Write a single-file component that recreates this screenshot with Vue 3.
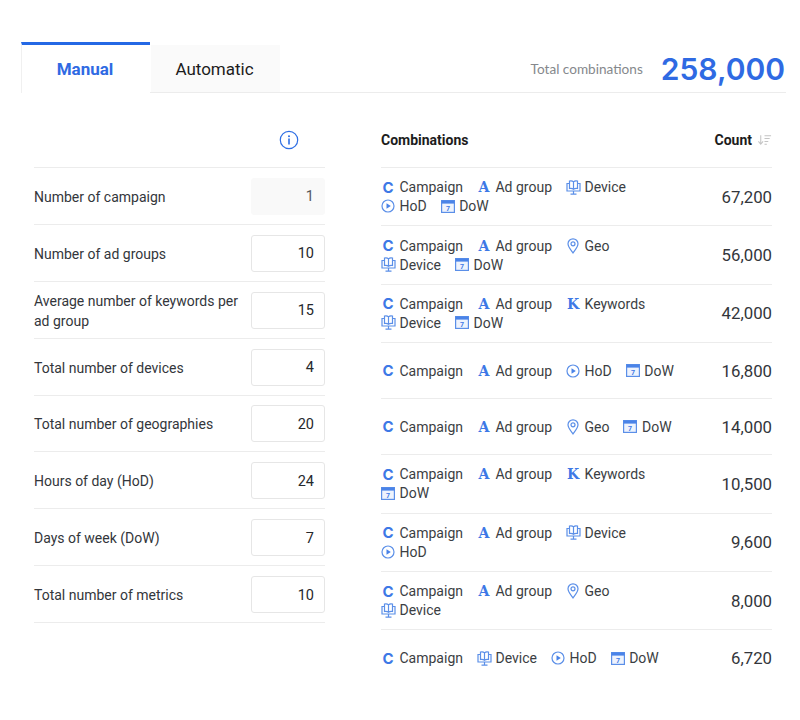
<template>
  <div class="page">
    <div class="tabs-bar">
      <div class="tab active">Manual</div>
      <div class="tab">Automatic</div>
      <div class="total">
        <span class="total-label">Total combinations</span>
        <span class="total-value">258,000</span>
      </div>
    </div>

    <div class="content">
      <div class="inputs">
        <div class="inputs-head">
          <svg class="info" width="20" height="20" viewBox="0 0 20 20">
            <circle cx="10" cy="10" r="8.7" fill="none" stroke="#2f6fe4" stroke-width="1.2" />
            <circle cx="10" cy="6.2" r="1" fill="#2f6fe4" />
            <rect x="9.2" y="8.5" width="1.6" height="6" fill="#2f6fe4" />
          </svg>
        </div>
        <div v-for="row in inputs" :key="row.label" class="input-row">
          <span class="input-label">{{ row.label }}</span>
          <div class="input-box" :class="{ locked: row.locked }">{{ row.value }}</div>
        </div>
      </div>

      <div class="combos">
        <div class="combos-head">
          <span>Combinations</span>
          <span class="count-head">
            Count
            <svg width="15" height="12" viewBox="0 0 16 12">
              <path d="M4 1v9M1.500 7.500L4 10.500l2.500-3M8 1.500h7M8 4.500h5.500M8 7.500h4M8 10.500h2.500" fill="none" stroke="#c4c4c4" stroke-width="1.100" />
            </svg>
          </span>
        </div>
        <div v-for="row in combos" :key="row.count" class="combo-row">
          <div class="chips">
            <span v-for="chip in row.chips" :key="chip" class="chip">
              <span v-if="letters[chip]" class="letter" :class="'letter-' + letters[chip]">{{ letters[chip] }}</span>
              <svg v-else-if="chip === 'Device'" class="icon device" width="15" height="15" viewBox="0 0 15 15">
                <g fill="none" stroke="#5b8fe8" stroke-width="1.200">
                  <path d="M3 3.500H1v7.500h13V3.500h-2" />
                  <path d="M3.500 1c1.500-.4 3 -.2 4 .8 1-1 2.500-1.200 4-.8v7.500c-1.500-.3-3 0-4 .8-1-.8-2.500-1.100-4-.8zM7.500 1.800v7.500" />
                  <path d="M7.500 11v3M4.500 14.200h6" />
                </g>
              </svg>
              <svg v-else-if="chip === 'Geo'" class="icon" width="14" height="16" viewBox="-1 0 14 16">
                <path d="M6 15C3.500 11.500 1 8.800 1 5.800a5 5 0 0 1 10 0c0 3-2.500 5.700-5 9.200z" fill="none" stroke="#5b8fe8" stroke-width="1.200" />
                <circle cx="6" cy="5.800" r="2" fill="none" stroke="#5b8fe8" stroke-width="1.200" />
              </svg>
              <svg v-else-if="chip === 'HoD'" class="icon" width="14" height="14" viewBox="0 0 14 14">
                <circle cx="7" cy="7" r="6" fill="none" stroke="#5b8fe8" stroke-width="1.200" />
                <path d="M5.500 4.300L9.800 7 5.500 9.700z" fill="#4a83e8" />
              </svg>
              <svg v-else class="icon" width="14" height="13" viewBox="0 0 14 13">
                <rect x="0.600" y="0.600" width="12.800" height="11.800" fill="#eef3fd" stroke="#5b8fe8" stroke-width="1.200" />
                <rect x="0.600" y="0.600" width="12.800" height="3" fill="#4a83e8" />
                <text x="7" y="11" text-anchor="middle" class="cal-day">7</text>
              </svg>
              {{ chip }}
            </span>
          </div>
          <span class="count">{{ row.count }}</span>
        </div>
      </div>
    </div>
  </div>
</template>

<script setup>
const letters = { Campaign: "C", "Ad group": "A", Keywords: "K" };

const inputs = [
  { label: "Number of campaign", value: 1, locked: true },
  { label: "Number of ad groups", value: 10 },
  { label: "Average number of keywords per ad group", value: 15 },
  { label: "Total number of devices", value: 4 },
  { label: "Total number of geographies", value: 20 },
  { label: "Hours of day (HoD)", value: 24 },
  { label: "Days of week (DoW)", value: 7 },
  { label: "Total number of metrics", value: 10 },
];

const combos = [
  { count: "67,200", chips: ["Campaign", "Ad group", "Device", "HoD", "DoW"] },
  { count: "56,000", chips: ["Campaign", "Ad group", "Geo", "Device", "DoW"] },
  { count: "42,000", chips: ["Campaign", "Ad group", "Keywords", "Device", "DoW"] },
  { count: "16,800", chips: ["Campaign", "Ad group", "HoD", "DoW"] },
  { count: "14,000", chips: ["Campaign", "Ad group", "Geo", "DoW"] },
  { count: "10,500", chips: ["Campaign", "Ad group", "Keywords", "DoW"] },
  { count: "9,600", chips: ["Campaign", "Ad group", "Device", "HoD"] },
  { count: "8,000", chips: ["Campaign", "Ad group", "Geo", "Device"] },
  { count: "6,720", chips: ["Campaign", "Device", "HoD", "DoW"] },
];
</script>

<style>
body {
  background: #fff;
}
</style>

<style scoped>
.page {
  width: 800px;
  height: 720px;
  padding-top: 42px;
  box-sizing: border-box;
  overflow: hidden;
  font-family: Roboto, "Liberation Sans", sans-serif;
  color: #33363b;
  background: #fff;
}

.tabs-bar {
  display: flex;
  align-items: flex-end;
  height: 50px;
  margin: 0 14px 0 21px;
  border-bottom: 1px solid #ececec;
}
.tab {
  display: flex;
  align-items: center;
  justify-content: center;
  width: 129px;
  height: 47px;
  padding-right: 2px;
  box-sizing: border-box;
  font-size: 17px;
  color: #1c1c1c;
  background: #fafafa;
}
.tab.active {
  width: 129px;
  height: 51px;
  margin-right: 1px;
  margin-bottom: -1px;
  border-top: 3px solid #2468e5;
  border-left: 1px solid #f0f0f0;
  background: #fff;
  color: #2f6ae3;
  font-weight: 700;
}
.total {
  display: flex;
  align-items: center;
  gap: 18px;
  margin-left: auto;
  height: 46px;
}
.total-label {
  font-family: Lato, sans-serif;
  font-size: 13.600px;
  color: #85888c;
}
.total-value {
  font-family: Inter, sans-serif;
  font-size: 30px;
  font-weight: 600;
  color: #2f6ae3;
  margin-right: 1px;
}

.content {
  display: flex;
  align-items: flex-start;
  padding: 0 28px 0 34px;
  gap: 56px;
}

.inputs {
  width: 291px;
  flex: none;
}
.inputs-head {
  display: flex;
  align-items: center;
  justify-content: flex-end;
  height: 75px;
  padding: 19px 26px 0 0;
  box-sizing: border-box;
  border-bottom: 1px solid #ececec;
}
.info {
  display: block;
}
.input-row {
  display: flex;
  align-items: center;
  justify-content: space-between;
  gap: 8px;
  height: 56.875px;
  padding-top: 1px;
  box-sizing: border-box;
  border-bottom: 1px solid #ececec;
}
.input-label {
  padding-top: 1px;
  font-size: 14px;
  line-height: 20px;
  max-width: 210px;
}
.input-box {
  flex: none;
  width: 74px;
  height: 37px;
  box-sizing: border-box;
  display: flex;
  align-items: center;
  justify-content: flex-end;
  padding: 1px 10px 0 0;
  border: 1px solid #e6e6e6;
  border-radius: 3px;
  font-size: 14.500px;
  color: #26282c;
  background: #fff;
}
.input-box.locked {
  border-color: #f9f9f9;
  background: #f9f9f9;
  color: #55585c;
}

.combos {
  flex: 1;
}
.combos-head {
  display: flex;
  align-items: center;
  justify-content: space-between;
  height: 75px;
  padding-top: 19px;
  box-sizing: border-box;
  font-size: 14px;
  font-weight: 700;
  color: #1c1c1c;
  border-bottom: 1px solid #ececec;
}
.count-head {
  display: flex;
  align-items: center;
  gap: 5px;
}
.combo-row {
  display: flex;
  align-items: center;
  justify-content: space-between;
  min-height: 56px;
  padding: 9.700px 0;
  box-sizing: border-box;
  border-bottom: 1px solid #ececec;
}
.combo-row:last-child {
  border-bottom: 0;
}
.chips {
  display: flex;
  flex-wrap: wrap;
  width: 312px;
}
.chip {
  display: inline-flex;
  align-items: center;
  gap: 4.500px;
  height: 19px;
  margin-right: 14px;
  font-size: 14px;
  color: #3b3e43;
}
.letter {
  display: inline-block;
  width: 14px;
  text-align: center;
  font-weight: 700;
  color: #3d78e6;
}
.letter-C {
  font-family: Inter, sans-serif;
  font-size: 15px;
}
.letter-A,
.letter-K {
  font-family: "DejaVu Serif", serif;
  font-size: 14px;
}
.icon {
  flex: none;
}
.icon.device {
  margin-right: -1px;
}
.cal-day {
  font-family: Roboto, sans-serif;
  font-size: 7px;
  font-weight: 700;
  fill: #3d78e6;
}
.count {
  font-size: 16.800px;
  color: #33363b;
}
</style>
